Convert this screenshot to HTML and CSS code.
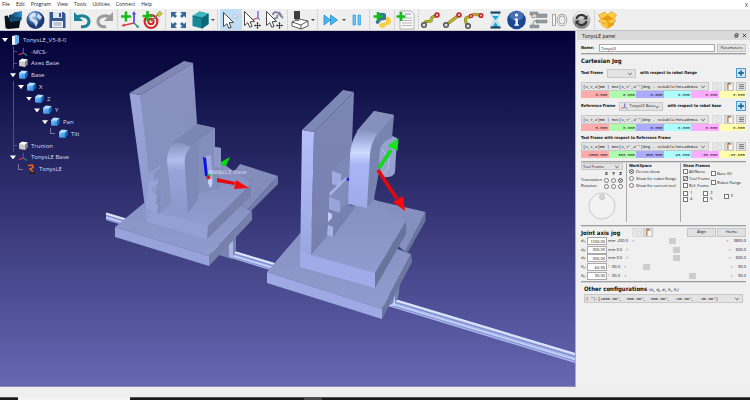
FILE: index.html
```html
<!DOCTYPE html>
<html lang="en">
<head>
<meta charset="utf-8">
<title>TonysLE</title>
<link rel="stylesheet" href="styles.css">
</head>
<body>
<svg class="defs" aria-hidden="true">
  <defs>
    <linearGradient id="blueCube" x2="1" y2="1"><stop offset="0" stop-color="#9fd8ff"/><stop offset="1" stop-color="#1177d8"/></linearGradient>
    <linearGradient id="steel" x2="0" y2="1"><stop offset="0" stop-color="#fff"/><stop offset="1" stop-color="#777"/></linearGradient>
    <linearGradient id="folder" x2="0" y2="1"><stop offset="0" stop-color="#0b1a2a"/><stop offset="1" stop-color="#050a12"/></linearGradient>
    <linearGradient id="folderBlue" x2="1"><stop offset="0" stop-color="#0d3552"/><stop offset="1" stop-color="#2b94d6"/></linearGradient>
    <radialGradient id="globe" cx=".4" cy=".3"><stop offset="0" stop-color="#b9d2f5"/><stop offset=".6" stop-color="#4570b5"/><stop offset="1" stop-color="#1c3972"/></radialGradient>
    <symbol id="cube" viewBox="0 0 10 10"><path d="M1 3.3 3.6.8 9.4 1v5L7 8.9 1.2 8.4z" fill="url(#blueCube)"/><path d="M1 3.3 3.6.8 9.4 1 7 3.7z" fill="#b4e2ff"/><path d="M7 3.7 9.4 1v5L7 8.9z" fill="#1569c0"/></symbol>
    <symbol id="cubeGray" viewBox="0 0 10 10"><path d="M1 3 4 .8 9.4 1.3v5L7 8.9 1.2 8z" fill="#c9c9c5"/><path d="M1 3 4 .8 9.4 1.3 7 3.7z" fill="#fff"/><path d="M7 3.7 9.4 1.3v5L7 8.9z" fill="#85857f"/></symbol>
    <symbol id="axes" viewBox="0 0 10 10"><path d="M5.3 6V.8" stroke="#4646e0" stroke-width="1.2"/><path d="M5.3 6 .7 7.8" stroke="#f03048" stroke-width="1.2"/><path d="M5.3 6 9 8.6" stroke="#208f78" stroke-width="1.2"/></symbol>
    <symbol id="cursor" viewBox="0 0 20 20"><path d="M3.5 2.5v14l3.3-2.8 2 4.6 2.3-1-2-4.5 4.4-.3z" fill="#fff" stroke="#333" stroke-width=".9"/></symbol>
    <symbol id="move" viewBox="0 0 8 8"><path d="M4 1v6M1 4h6" stroke="#222" stroke-width=".9"/><path d="M4 0 5.3 1.7H2.7zM4 8 2.7 6.3h2.6zM0 4l1.7-1.3v2.6zM8 4 6.3 5.3V2.7z" fill="#222"/></symbol>
    <symbol id="paste" viewBox="0 0 10 10"><path d="M2 1.5h5v7H2z" fill="#c99b68"/><path d="M3.3.8h2.4v1.4H3.3z" fill="#777"/><path d="M4.2 3.2h3.6v5.5H4.2z" fill="#fff" stroke="#d8cfc4" stroke-width=".3"/></symbol>
    <symbol id="copy" viewBox="0 0 10 10"><path d="M2.5 1.8h3v5h-3zM4.7 3.5h3v5h-3z" fill="#f0f0f0" stroke="#c6c6c6" stroke-width=".4"/></symbol>
    <symbol id="list" viewBox="0 0 10 10"><path d="M2.3 3h5.4M2.3 5h5.4M2.3 7h5.4" stroke="#777" stroke-width="1.1"/></symbol>
  </defs>
</svg>
<div class="app">
<header class="menubar">
  <nav class="menus"><a href="#">File</a><a href="#">Edit</a><a href="#">Program</a><a href="#">View</a><a href="#">Tools</a><a href="#">Utilities</a><a href="#">Connect</a><a href="#">Help</a></nav>
  <button class="closedoc" aria-label="Close">X</button>
</header>

<div class="toolbar">
  <div class="group g3">
    <button aria-label="Open"><svg viewBox="0 0 21 20"><path d="m6 5 4-1 1-1.500L19 1v9L6 12z" fill="url(#folderBlue)"/><path d="m1.500 6 3-.5L6 8l12-1-2 11-11 1-2.500-1z" fill="url(#folder)"/><path d="m6 8 12-1-.7 3.500-10 1.500z" fill="#14507c"/></svg></button>
    <button aria-label="Online library"><svg viewBox="0 0 21 20"><circle cx="10.500" cy="10" r="9" fill="url(#globe)"/><path d="M4 6c2-3 5-4 7-3l-1 3-3 1 1 2 4 1 1 3-2 4-2-4-4-3zM13 3l4 4-2 3-3-3z" fill="#e8f0fc" opacity=".85"/></svg></button>
    <button aria-label="Save"><svg viewBox="0 0 21 20"><path d="M2.500 2h14l2 2v14h-16z" fill="#36578d"/><path d="M6 2h9v6H6z" fill="#dfe5ee"/><path d="M12 3h2v4h-2z" fill="#36578d"/><path d="M5 11h11v6.500H5z" fill="#eef1f5"/><path d="M6.500 13h8M6.500 15h8" stroke="#8c9bb5"/></svg></button>
  </div>
  <div class="group g2 wide">
    <button aria-label="Undo"><svg viewBox="0 0 21 20"><path d="M4 8c5-4 13-2 13 3.500 0 4-4 6-8 5" fill="none" stroke="#1d8296" stroke-width="3"/><path d="M2 2v9h9z" fill="#1d8296"/></svg></button>
    <button aria-label="Redo"><svg viewBox="0 0 21 20"><path d="M17 8C12 4 4 6 4 11.500c0 4 4 6 8 5" fill="none" stroke="#9b9b9b" stroke-width="3"/><path d="M19 2v9h-9z" fill="#9b9b9b"/></svg></button>
  </div>
  <div class="group g2">
    <button aria-label="Add reference frame"><svg viewBox="0 0 21 20"><path d="M14 13V3" stroke="#5555ee" stroke-width="1.800"/><path d="m12 4.500 2-3.500 2 3.500z" fill="#4444dd"/><path d="m14 13-11 2.500" stroke="#e03b48" stroke-width="1.600"/><path d="m1 16 3.500-2.500.5 3z" fill="#e03b48"/><path d="m14 13 4 4" stroke="#269a84" stroke-width="1.600"/><path d="m19.500 18-3.600-.8 2-2.200z" fill="#269a84"/><path d="M6 1.500v10M1 6.500h10" stroke="#16bd16" stroke-width="2.600"/></svg></button>
    <button aria-label="Add target"><svg viewBox="0 0 21 20"><circle cx="9" cy="11.500" r="7.500" fill="#d72828"/><circle cx="9" cy="11.500" r="5.200" fill="#fff"/><circle cx="9" cy="11.500" r="3.700" fill="#d72828"/><circle cx="9" cy="11.500" r="1.500" fill="#fff"/><path d="m9 11.500 8-8" stroke="#777" stroke-width="1.200"/><path d="m15 3.500 3-2.500 1 2 1.500.5-3 3-2-.5z" fill="#c9cc28" stroke="#77781a" stroke-width=".4"/><path d="M5.500 1v10M.5 6h10" stroke="#16bd16" stroke-width="2.600"/></svg></button>
  </div>
  <div class="group g2 drop">
    <button aria-label="Fit all"><svg viewBox="0 0 21 20"><path d="M3 2h15v16H3z" fill="#f8fbfe"/><path d="M3 2h6L7 4l2 2-2 2-2-2-2 2zM18 2v6l-2-2-2 2-2-2 2-2-2-2zM3 18v-6l2 2 2-2 2 2-2 2 2 2zM18 18h-6l2-2-2-2 2-2 2 2 2-2z" fill="#356a9b"/></svg></button>
    <button aria-label="Isometric view"><svg viewBox="0 0 21 20"><path d="m2.500 6 7-4.500 9 2V14l-6.500 4.500-9.500-2.500z" fill="#158997"/><path d="m2.500 6 7-4.500 9 2L12 8z" fill="#41b5bf"/><path d="m12 8 6.500-4.500V14L12 18.500z" fill="#086a78"/><path d="M2.500 6 12 8v10.500" fill="none" stroke="#075562" stroke-width=".7"/></svg></button>
  </div>
  <div class="group g3">
    <button class="active" aria-label="Select"><svg viewBox="0 0 21 20"><use href="#cursor" width="20" height="20"/><path d="M14 4v4l1.200-.8.8 1.500.8-.4-.7-1.600h1.400z" fill="#fff" stroke="#8495aa" stroke-width=".4"/></svg></button>
    <button aria-label="Move frame"><svg viewBox="0 0 21 20"><path d="M16 8V1" stroke="#5555e8" stroke-width="1.200"/><path d="m16 8-7 2" stroke="#e14450" stroke-width="1.200"/><path d="m16 8 2 2" stroke="#279"/><use href="#cursor" width="20" height="20" x="-1" y="-1"/><use href="#move" x="12" y="12" width="7" height="7"/></svg></button>
    <button aria-label="Move tool"><svg viewBox="0 0 21 20"><path d="M9 5c0-3 4-4 6-1l4 4m-9 0c3 1 4-1 3-3m2-3 3 5" stroke="#7f829e" stroke-width="1.800" fill="none"/><use href="#cursor" width="20" height="20" x="-1" y="-1"/><use href="#move" x="12" y="12" width="7" height="7"/></svg></button>
  </div>
  <div class="group g1 drop">
    <button aria-label="Collision check"><svg viewBox="0 0 21 20"><path d="m2 12 7-3 9 2v5l-7 3-9-3z" fill="#fff" stroke="#333" stroke-width=".8"/><path d="m2 12 9 3 7-4m-7 4v4" fill="none" stroke="#333" stroke-width=".8"/><path d="M4 1h6v8H4z" fill="#3e3e3e"/><path d="M5 9h4v2H5z" fill="#777"/></svg></button>
  </div>
  <div class="group play">
    <button class="drop" aria-label="Fast simulation"><svg viewBox="0 0 21 20"><path d="m4 5 6.500 5L4 15zM10.500 5l7 5-7 5z" fill="#49b6f1" stroke="#218dcc" stroke-width=".8"/></svg></button>
    <button aria-label="Pause"><svg viewBox="0 0 21 20"><path d="M7 5h2.500v10H7zM12 5h2.500v10H12z" fill="#6bc4f8" stroke="#2f9bd9" stroke-width=".7"/></svg></button>
  </div>
  <div class="group g1 tight">
    <button aria-label="Add Python program"><svg viewBox="0 0 21 20"><path d="M6 10V5c0-3 8-3 8 0v4c0 2-5 0-6 3l-2 2c-3 0-3-4 0-4z" fill="#3973a8"/><path d="M14 7h2c4 1 4 7 0 8h-2c0 4-7 4-7 0 0-3 7-1 7-4z" fill="#f5cf3f"/><path d="M6 2v9M1.500 6.500h9" stroke="#16bd16" stroke-width="2.600"/></svg></button>
  </div>
  <div class="group g1 tight">
    <button aria-label="Add program"><svg viewBox="0 0 21 20"><path d="M4 1h11l3 3v15H4z" fill="#fafafa" stroke="#999" stroke-width=".7"/><path d="M6 8h10M6 10.500h10M6 13h10M6 15.500h10" stroke="#999" stroke-width=".7"/><path d="M9 4h6" stroke="#a77ae0"/><path d="M5 2v9M.5 6.500h9" stroke="#16bd16" stroke-width="2.600"/></svg></button>
  </div>
  <div class="group g8">
    <button aria-label="Joint move"><svg viewBox="0 0 21 20"><path d="M4 15c1-6 3-2 7-4 0-5 3-4 6-6" stroke="#7c7a18" stroke-width="3" fill="none"/><path d="M4 15c1-6 3-2 7-4 0-5 3-4 6-6" stroke="#c1ba2e" stroke-width="1.700" fill="none"/><circle cx="4" cy="15" r="2.300" fill="#ddd" stroke="#555" stroke-width="1.500"/><circle cx="17" cy="5" r="2" fill="#f4b7b7" stroke="#c5222d" stroke-width="1.500"/></svg></button>
    <button aria-label="Linear move"><svg viewBox="0 0 21 20"><path d="M4 15 17 5" stroke="#7c7a18" stroke-width="3"/><path d="M4 15 17 5" stroke="#c1ba2e" stroke-width="1.700"/><circle cx="4" cy="15" r="2.300" fill="#ddd" stroke="#555" stroke-width="1.500"/><circle cx="17" cy="5" r="2" fill="#f4b7b7" stroke="#c5222d" stroke-width="1.500"/></svg></button>
    <button aria-label="Circular move"><svg viewBox="0 0 21 20"><path d="M5 16C1 10 2 7 6 7c4-4 7-2 12-2" stroke="#7c7a18" stroke-width="3" fill="none"/><path d="M5 16C1 10 2 7 6 7c4-4 7-2 12-2" stroke="#c1ba2e" stroke-width="1.700" fill="none"/><circle cx="5" cy="16" r="2.300" fill="#ddd" stroke="#555" stroke-width="1.500"/><circle cx="8" cy="6" r="1.600" fill="#f4b7b7" stroke="#c5222d" stroke-width="1.300"/><circle cx="18" cy="5.500" r="1.800" fill="#f4b7b7" stroke="#c5222d" stroke-width="1.500"/></svg></button>
    <button aria-label="Pause instruction"><svg viewBox="0 0 21 20"><path d="M6.500 3h8c0 4-2 5-3 7 1 2 3 3 3 7h-8c0-4 2-5 3-7-1-2-3-3-3-7z" fill="#c7ecfa" stroke="#79a8bd" stroke-width=".5"/><path d="M7.500 6h6l-3 4zM10.500 12l3 5h-6z" fill="#18a5df"/><path d="M5.500 2.500h10M5.500 17.500h10" stroke="#1d3d51" stroke-width="1.800"/></svg></button>
    <button aria-label="Message"><svg viewBox="0 0 21 20"><circle cx="10.500" cy="10" r="9.300" fill="#1b4795"/><ellipse cx="10.500" cy="6" rx="7" ry="4.500" fill="#6993d0" opacity=".55"/><circle cx="10.500" cy="5" r="1.500" fill="#fff"/><path d="M8.500 8.500h3.300v6H13v1.200H8.300v-1.200h1.200V9.700h-1z" fill="#fff"/></svg></button>
    <button aria-label="Program call"><svg viewBox="0 0 21 20"><path d="M2 2h8v3H2zM8 4h11v3.500H8zM8 10h11v3H8zM2 15h9v3H2z" fill="#929aa3" stroke="#777e86" stroke-width=".5"/><path d="M4 4c-1 5 1 4 4 3M5 15c0-4 1-5 4-4" fill="none" stroke="#555" stroke-width=".7"/><path d="m4 5 3-1 2 2-2 2z" fill="#e4d2b0"/></svg></button>
    <button aria-label="Set IO"><svg viewBox="0 0 21 20"><path d="M3.500 4.500h3v11h-3z" fill="#fff" stroke="#888" stroke-width=".8"/><ellipse cx="13" cy="10" rx="4" ry="5" fill="none" stroke="#888" stroke-width="2.600"/><ellipse cx="13" cy="10" rx="4" ry="5" fill="none" stroke="#fff" stroke-width="1.200"/></svg></button>
    <button aria-label="Update"><svg viewBox="0 0 21 20"><circle cx="10.500" cy="10" r="8.800" fill="url(#steel)" stroke="#aaa" stroke-width=".4"/><path d="M5.500 9c1-5 7-5 9-2M15.500 11c-1 5-7 5-9 2" fill="none" stroke="#333" stroke-width="2.200"/><path d="M16.500 5v4.500H12zM4.500 15v-4.500H9z" fill="#333"/></svg></button>
  </div>
  <div class="group g1 last">
    <button aria-label="Add-ins"><svg viewBox="0 0 21 20"><path d="m4 9 6.500 2L17 9v6l-6.500 4L4 15z" fill="#f2a516"/><path d="m4 9 6.500 2v8L4 15z" fill="#ffc83d"/><path d="m4 9-2.500-4L8 2l2.500 3L14 1.500 19.500 5 17 9l2 2-5.500 3-3-3-3.500 3L1.500 11z" fill="#ffce45" stroke="#d98c09" stroke-width=".6"/><path d="m4 9 6.500-4L17 9l-6.500 2z" fill="#e89c12"/></svg></button>
  </div>
</div>

<main class="workspace">
  <section class="viewport">
    <svg class="scene" viewBox="0 31 575 356" preserveAspectRatio="xMinYMin slice" role="img" aria-label="3D view">
      <defs>
        <linearGradient id="front" x2="0" y2="1"><stop offset="0" stop-color="#b5c0fa"/><stop offset="1" stop-color="#98a4de"/></linearGradient>
        <linearGradient id="plateL" x2="0" y2="1"><stop offset="0" stop-color="#9ca5d8"/><stop offset="1" stop-color="#8c97cb"/></linearGradient>
        <linearGradient id="side" x2="0" y2="1"><stop offset="0" stop-color="#7c86b4"/><stop offset="1" stop-color="#777fae"/></linearGradient>
        <linearGradient id="sideL" x2="0" y2="1"><stop offset="0" stop-color="#8992bf"/><stop offset="1" stop-color="#818bba"/></linearGradient>
        <linearGradient id="top" x2="0" y2="1"><stop offset="0" stop-color="#8690bf"/><stop offset="1" stop-color="#909cce"/></linearGradient>
        <linearGradient id="headR" x2="0" y2="1"><stop offset="0" stop-color="#8690bd"/><stop offset=".14" stop-color="#a6b1e3"/><stop offset=".3" stop-color="#cfdaff"/><stop offset=".45" stop-color="#a9b5f5"/><stop offset="1" stop-color="#9eabe9"/></linearGradient>
        <linearGradient id="headL" x2="0" y2="1"><stop offset="0" stop-color="#8993bf"/><stop offset=".25" stop-color="#b3bdf0"/><stop offset=".4" stop-color="#98a4d8"/><stop offset="1" stop-color="#8c97cc"/></linearGradient>
      </defs>
      <g>
        <path d="m106 213 469 140v10L106 220z" fill="#a8b6ee"/>
        <path d="m106 213.500 469 140.500" stroke="#d9e6ff" stroke-width="2"/>
        <path d="m106 215.500 469 141" stroke="#7984c0"/>
        <path d="m106 217.500 469 142" stroke="#c5d2ff" stroke-width="1.500"/>
        <path d="m106 219 469 142" stroke="#6874ae" stroke-width=".6"/>
      </g>
      <g>
        <path d="m219 255 17-19v14l-4 9z" fill="#7984b3"/><path d="m229 244 4-3v17l-4-1z" fill="#aab5e6"/>
        <path d="m144 203-29 24 94 29 43-45-65-30z" fill="url(#top)"/>
        <path d="m115 227 94 29v10l-94-29z" fill="#97a3da"/>
        <path d="m209 256 43-45v9l-43 46z" fill="#7680aa"/>
        <path d="m240 164 38 12-30 33-35-10z" fill="#838dbc"/>
        <path d="m278 176v8l-28 28-2-3z" fill="#737da9"/>
        <path d="m140 95 53-32 7 106-45 50z" fill="url(#sideL)"/>
        <path d="m129.500 93 10.500 2 18 92-3 33-8 2z" fill="url(#plateL)"/>
        <path d="m129.500 93 54.500-32 9.500 2L140 95z" fill="#7e88b3"/>
        <path d="m140 95 9 79 12-9-8 10 4 11-4 15 8-7-2 18 9 6 30-34-5-60-35-20z" fill="#8791c0"/>
        <path d="m149 174 11-8v2l-10 7zm0 7h6l3-3v6l-6 3v5l5 3-1 7-3 3 5-1-1 12-12-10z" fill="#98a3d5"/>
        <path d="m158 216 8-9 24-21 31-24 30 22-43 42z" fill="url(#top)"/>
        <path d="m147 213 16 1 5 1.500 40 10.500-1 13-60-17z" fill="#949fd3"/>
        <path d="m208 226 43-42v12l-44 43z" fill="#7781ac"/>
        <path d="m173 143 24-19 18 4v19l6 1v40l-21 5-12 20z" fill="#848ebc"/>
        <path d="m172 143 25-19 18 4-25 19z" fill="#7c86b2"/>
        <path d="m167 161c1-14 5-20 14-18l10 4c-5 5-7 10-6 20l3 46-16-5z" fill="url(#headL)"/>
        <path d="m185 166c-1-13 3-18 14-23l-1 57-10 13z" fill="#7f89b7"/>
        <path d="m214 147 7 1v20l-7-1z" fill="#8e99c8"/>
        <path d="m206 156 5-1 2 29-4 4z" fill="#a0abd9"/><path d="m209 170 3 11-1 7-3-5z" fill="#c9d5ff"/>
        <path d="m203 157 3 1 2 19-3-1z" fill="#0712e8"/>
        <path d="m207 175 4-2-1 5z" fill="#15cf24"/><circle cx="208.500" cy="177.500" r="2" fill="#e91317"/>
        <path d="m221 162 9-5-4 9-5-1z" fill="#05dc0c"/>
        <path d="m217 178 18 4-.5 3L217 182z" fill="#e5070b"/><path d="m236 180 13 8-15 1z" fill="#f60c0c"/>
        <text x="209" y="174" class="label3d">MCS</text><text x="209" y="174" class="label3d">TonysLE Base</text>
      </g>
      <g>
        <path d="m388 304 12-21-2 15-5 8z" fill="#7883b3"/><path d="m393 303 2-8v11l-6 0z" fill="#c2ceff"/>
        <path d="m302 231-35 41 115 37 29-55-33-12-52-20z" fill="url(#top)"/>
        <path d="m267 272 115 37v10l-115-36z" fill="#9faae4"/>
        <path d="m382 309 29-55 1 8-30 57z" fill="#6c779f"/>
        <path d="m374 200 51.500 12-20 40-35-30z" fill="#858fc0"/>
        <path d="m425.500 212v9l-18 32-3-1z" fill="#69749b"/>
        <path d="m314 132 40-40-5 125-38 38z" fill="url(#side)"/>
        <path d="m302 130 12 2-3 123-11 12z" fill="url(#front)"/>
        <path d="m302 130 41-40 11 2-40 40z" fill="#7d87b5"/>
        <path d="m311 255 43-50 20-6 32 23-31 51z" fill="url(#top)"/>
        <path d="m300 251 11 4 64 18v15l-75-21z" fill="#a0acea"/>
        <path d="m375 273 31-52v13l-31 54z" fill="#69749c"/>
        <path d="m332 171 17-18v29l-17 3z" fill="#7d88b7"/><path d="m332 171 9 3v13l-9-3z" fill="#a0acdf"/>
        <path d="m329 196 20-17v20l-10 14-10-4z" fill="#818cbb"/><path d="m329 197 11 4v12l-11-4z" fill="#99a5d9"/>
        <path d="m329 193 17-16v3l-15 15v2z" fill="#a8b3e3"/>
        <path d="m327 224 20-19 9 1-23 31-6-2z" fill="#7681b0"/><path d="m328 225 5 2v10l-6-2z" fill="#a7b3e7"/><path d="m328 212 4 2v4l-4 4z" fill="#c0ccfa"/>
        <path d="m346 180 3-3v4z" fill="#111ce3"/>
        <path d="m390 135 7 3-2 34c-1 5-9 6-14 5l-7-8 5-25z" fill="#96a2d0"/>
        <path d="m380 147 9 12-1 10-5 5" fill="none" stroke="#b5c2ed"/>
        <path d="m357 131 17-20 20 4-2 23c-12 3-14 14-12 28l-6 33-8 9-6-63z" fill="#7883b0"/>
        <path d="m357 131 17-20 20 4-20 24z" fill="#8690bd"/>
        <path d="m350 158c0-14 5-24 9-29l19 4c-5 6-7 14-8 21l-3 54-19-4z" fill="url(#headR)"/>
        <path d="m379 168 12-18" stroke="#10db15" stroke-width="3.500"/><path d="m398.500 138-1 13-10-5z" fill="#16e51a"/>
        <path d="m378 170 19 29" stroke="#e5070b" stroke-width="3.500"/><path d="m393 202 10-6 2 15z" fill="#f60c0c"/>
      </g>
    </svg>
    <ul class="tree">
      <li><i class="tw"></i><svg viewBox="0 0 10 10"><path d="M2 1 7 0v9.500L2 10z" fill="#eaf6ff"/><path d="m5 1 4-.7v8L5 9.500z" fill="#5fb2ef"/></svg>TonysLE_V5-8-0</li>
      <li class="d1 leaf"><svg viewBox="0 0 10 10"><use href="#axes"/></svg>-MCS-</li>
      <li class="d1 leaf"><svg viewBox="0 0 10 10"><use href="#cubeGray"/></svg>Axes Base</li>
      <li class="d1"><i class="tw"></i><svg viewBox="0 0 10 10"><use href="#cube"/></svg>Base</li>
      <li class="d2 through"><i class="tw"></i><svg viewBox="0 0 10 10"><use href="#cube"/></svg>X</li>
      <li class="d3 through"><i class="tw"></i><svg viewBox="0 0 10 10"><use href="#cube"/></svg>Z</li>
      <li class="d4 through"><i class="tw"></i><svg viewBox="0 0 10 10"><use href="#cube"/></svg>Y</li>
      <li class="d5 through"><i class="tw"></i><svg viewBox="0 0 10 10"><use href="#cube"/></svg>Pan</li>
      <li class="d6 through"><i class="elbow"></i><svg viewBox="0 0 10 10"><use href="#cube"/></svg>Tilt</li>
      <li class="d1 leaf"><svg viewBox="0 0 10 10"><use href="#cubeGray"/></svg>Trunion</li>
      <li class="d1"><i class="tw"></i><svg viewBox="0 0 10 10"><use href="#axes"/></svg>TonysLE Base</li>
      <li class="d2"><i class="elbow"></i><svg viewBox="0 0 10 10"><path d="M2 1.500 6.500 1 7 3.500 4 5l3 3" fill="none" stroke="#e8651b" stroke-width="1.500"/><path d="M4 8h5v2H4z" fill="#222"/></svg>TonysLE</li>
    </ul>
  </section>

  <aside class="panel">
    <div class="titlebar"><span>TonysLE panel</span><button aria-label="Float"><svg viewBox="0 0 6 6"><path d="M2 .8h3v3H2zM1 2.200h3v3H1z" fill="none" stroke="#333" stroke-width=".7"/></svg></button><button aria-label="Close panel"><svg viewBox="0 0 6 6"><path d="m1 1 4 4m0-4L1 5" stroke="#222" stroke-width="1"/></svg></button></div>
    <div class="content">
      <div class="namerow"><label for="name">Name:</label><input id="name" value="TonysLE"><button class="btn">Parameters</button></div>
      <hr>
      <h2>Cartesian Jog</h2>
      <div class="framerow"><label for="tf">Tool Frame</label><span class="select tool"><select id="tf"><option></option></select></span><b>with respect to robot flange</b><button class="plus" aria-label="Add tool"><svg viewBox="0 0 10 10"><path d="M5 1.500v7M1.500 5h7" stroke="#236e9d" stroke-width="2.200"/></svg></button></div>
      <div class="poserow"><span class="select mono"><select aria-label="Tool pose format"><option>[X,Y,Z]mm | Rot[X,Y',Z'']deg - Stäubli/Mecademic</option></select></span><button class="btn faint" aria-label="Copy"><svg viewBox="0 0 10 10"><use href="#copy"/></svg></button><button class="btn" aria-label="Paste"><svg viewBox="0 0 10 10"><use href="#paste"/></svg></button><button class="btn" aria-label="More"><svg viewBox="0 0 10 10"><use href="#list"/></svg></button></div>
      <div class="pose"><input aria-label="X" value="0.000"><input aria-label="Y" value="0.000"><input aria-label="Z" value="0.000"><input aria-label="RX" value="0.000"><input aria-label="RY" value="0.000"><input aria-label="RZ" value="0.000"></div>
      <div class="framerow second"><label for="rf">Reference Frame</label><span class="select ref"><svg viewBox="0 0 10 10"><use href="#axes"/></svg><select id="rf"><option>TonysLE Base</option></select></span><b>with respect to robot base</b><button class="plus" aria-label="Add reference"><svg viewBox="0 0 10 10"><path d="M5 1.500v7M1.500 5h7" stroke="#236e9d" stroke-width="2.200"/></svg></button></div>
      <div class="poserow"><span class="select mono"><select aria-label="Reference pose format"><option>[X,Y,Z]mm | Rot[X,Y',Z'']deg - Stäubli/Mecademic</option></select></span><button class="btn faint" aria-label="Copy"><svg viewBox="0 0 10 10"><use href="#copy"/></svg></button><button class="btn" aria-label="Paste"><svg viewBox="0 0 10 10"><use href="#paste"/></svg></button><button class="btn" aria-label="More"><svg viewBox="0 0 10 10"><use href="#list"/></svg></button></div>
      <div class="pose"><input aria-label="X" value="0.000"><input aria-label="Y" value="0.000"><input aria-label="Z" value="0.000"><input aria-label="RX" value="0.000"><input aria-label="RY" value="0.000"><input aria-label="RZ" value="0.000"></div>
      <h3>Tool Frame with respect to Reference Frame</h3>
      <div class="poserow close"><span class="select mono"><select aria-label="Tool to reference pose format"><option>[X,Y,Z]mm | Rot[X,Y',Z'']deg - Stäubli/Mecademic</option></select></span><button class="btn faint" aria-label="Copy"><svg viewBox="0 0 10 10"><use href="#copy"/></svg></button><button class="btn" aria-label="Paste"><svg viewBox="0 0 10 10"><use href="#paste"/></svg></button><button class="btn" aria-label="More"><svg viewBox="0 0 10 10"><use href="#list"/></svg></button></div>
      <div class="pose"><input aria-label="X" value="1500.000"><input aria-label="Y" value="300.000"><input aria-label="Z" value="300.000"><input aria-label="RX" value="90.000"><input aria-label="RY" value="-30.000"><input aria-label="RZ" value="-30.000"></div>
      <hr class="spaced">
      <div class="sections">
        <div class="jog">
          <span class="select"><select aria-label="Jog frame"><option>Tool Frame</option></select></span>
          <div class="xyz">
            <span></span><b>X</b><b>Y</b><b>Z</b>
            <span>Translation</span><input type="radio" name="ax" aria-label="Translate X"><input type="radio" name="ax" aria-label="Translate Y"><input type="radio" name="ax" aria-label="Translate Z" checked>
            <span>Rotation</span><input type="radio" name="rot" aria-label="Rotate X"><input type="radio" name="rot" aria-label="Rotate Y"><input type="radio" name="rot" aria-label="Rotate Z">
          </div>
          <svg class="dial" viewBox="0 0 28 28"><circle cx="14" cy="14" r="13" fill="#f2f2f2" stroke="#b8b8b8" stroke-width=".7"/><circle cx="14" cy="5" r="2.500" fill="#d9d9d9" stroke="#aaa" stroke-width=".6"/></svg>
        </div>
        <div class="space">
          <h4>WorkSpace</h4>
          <label><input type="radio" name="ws" checked>Do not show</label>
          <label><input type="radio" name="ws">Show for robot flange</label>
          <label><input type="radio" name="ws">Show for current tool</label>
        </div>
        <div class="frames">
          <h4>Show Frames</h4>
          <div class="cols">
            <div><label><input type="checkbox">All/None</label><label><input type="checkbox" checked>Tool Frame</label><label><input type="checkbox">Ref. Frame</label></div>
            <div class="mid"><label><input type="checkbox">Base (0)</label><label><input type="checkbox">Robot Flange</label></div>
          </div>
          <div class="nums">
            <div><label><input type="checkbox">1</label><label><input type="checkbox">4</label></div>
            <div><label><input type="checkbox">2</label><label><input type="checkbox">5</label></div>
            <div class="mid"><label><input type="checkbox">3</label></div>
          </div>
        </div>
      </div>
      <hr class="spaced">
      <div class="jointhead"><h2>Joint axis jog</h2><button class="btn faint" aria-label="Copy joints"><svg viewBox="0 0 10 10"><use href="#copy"/></svg></button><button class="btn" aria-label="Paste joints"><svg viewBox="0 0 10 10"><use href="#paste"/></svg></button><button class="btn big">Align</button><button class="btn big">Home</button></div>
      <div class="joints">
        <div><label for="j1">d₁:</label><input id="j1" value="1500.00"><span>mm -200.0</span><i>&lt;</i><input type="range" aria-label="Joint 1" min="-200" max="3800" value="1500"><i>&gt;</i><span>3800.0</span></div>
        <div><label for="j2">d₂:</label><input id="j2" value="300.00"><span>mm 0.0</span><i>&lt;</i><input type="range" aria-label="Joint 2" min="0" max="600" value="300"><i>&gt;</i><span>600.0</span></div>
        <div><label for="j3">d₃:</label><input id="j3" value="300.00"><span>mm 0.0</span><i>&lt;</i><input type="range" aria-label="Joint 3" min="0" max="600" value="300"><i>&gt;</i><span>600.0</span></div>
        <div><label for="j4">θ₄:</label><input id="j4" value="-60.00"><span>° -90.0</span><i>&lt;</i><input type="range" aria-label="Joint 4" min="-90" max="90" value="-60"><i>&gt;</i><span>90.0</span></div>
        <div><label for="j5">θ₅:</label><input id="j5" value="30.00"><span>° -90.0</span><i>&lt;</i><input type="range" aria-label="Joint 5" min="-90" max="90" value="30"><i>&gt;</i><span>90.0</span></div>
      </div>
      <hr>
      <div class="other">
        <h2>Other configurations <small>(d₁, d₂, d₃, θ₄, θ₅)</small></h2>
        <span class="select mono"><select aria-label="Other configurations"><option>( *)-[1500.00°, &nbsp;300.00°, &nbsp;300.00°, &nbsp;-60.00°, &nbsp; 30.00°]</option></select></span>
      </div>
    </div>
  </aside>
</main>
<footer class="status"></footer>
<div class="taskbar"><span class="search"></span><span class="task"></span></div>
</div>
</body>
</html>
```
FILE: styles.css
```css
* { box-sizing: border-box; }
body { margin: 0; font-family: "Open Sans", "Noto Sans", sans-serif; font-size: 4px; line-height: 6px; color: #111; background: #f0f0f0; }
button, input, select { font: inherit; color: inherit; margin: 0; padding: 0; border: 0; background: none; border-radius: 0; min-width: 0; }
h2, h3, h4, hr, ul { margin: 0; padding: 0; border: 0; }
i { font-style: normal; }
.defs { position: absolute; width: 0; height: 0; }

.app { display: grid; grid-template-rows: 9px 22px 1fr 10px 3px; height: 100vh; }

.menubar { display: flex; justify-content: space-between; padding: 0 2px; background: #fff; font-size: 5px; line-height: 8px; }
.menus { display: flex; gap: 6px; }
.menus a { color: #222; text-decoration: none; }
.closedoc { color: #222; }

.toolbar { display: flex; padding-left: 3px; background: #efefef; border-bottom: 1px solid #c4c4c8; }
.group { display: flex; flex: none; position: relative; margin-right: 5px; }
.group::after { content: ""; position: absolute; right: -3px; top: 1px; bottom: 1px; border-right: 1px dotted #bcbcbc; }
.group button { flex: 1; display: flex; align-items: center; justify-content: center; }
.group svg { width: 21px; height: 20px; display: block; flex: none; }
.g1 { width: 21px; }
.g2 { width: 43px; }
.g3 { width: 65px; }
.g8 { width: 172px; }
.g3:first-child { margin-right: 4px; }
.tight { margin-right: 3px; }
.tight::after { right: -2px; }
.last::after { display: none; }
.play { width: 47px; }
.play button:last-child { flex: 0 0 21px; }
.group.drop { box-sizing: content-box; padding-right: 4px; }
.drop::before { content: ""; position: absolute; right: 0; top: 10px; border: 2px solid transparent; border-top-color: #444; border-bottom: 0; }
.play .drop { padding-right: 5px; }
.play .drop::before { right: 21px; }
.active { background: #c1ddf3; }

.workspace { display: grid; grid-template-columns: 1fr 174px; min-height: 0; }
.viewport { position: relative; overflow: hidden; border-right: 1px solid #aaaacb; border-bottom: 1px solid #8c8cb8; background: linear-gradient(#010136, #6767b3); }
.scene { position: absolute; inset: 0; width: 100%; height: 100%; }
.label3d { font: 6px Roboto, sans-serif; fill: #d6daf0; opacity: .8; }

.tree { position: relative; list-style: none; padding: 3px 0 0 2px; color: #dcdcec; font-size: 6px; line-height: 10px; width: 120px; display: grid; grid-template-rows: repeat(12, 1fr); height: 144px; }
.tree li { display: flex; align-items: center; gap: 2px; position: relative; }
.tree svg { width: 10px; height: 10px; margin-right: 1px; flex: none; }
.tw { width: 6px; height: 4px; background: #fff; clip-path: polygon(0 0, 100% 0, 50% 100%); }
.elbow { width: 5px; height: 6px; margin: -5px 1px 0 0; border: solid #7777a0; border-width: 0 0 1px 1px; }
.tree .d1 { padding-left: 8px; }
.tree .d2 { padding-left: 16px; }
.tree .d3 { padding-left: 24px; }
.tree .d4 { padding-left: 32px; }
.tree .d5 { padding-left: 40px; }
.tree .d6 { padding-left: 48px; }
.tree .leaf { padding-left: 16px; }
.leaf::before, .through::before { content: ""; position: absolute; left: 11px; top: 0; bottom: 0; border-left: 1px solid #50507e; }
.leaf::after { content: ""; position: absolute; left: 11px; top: 5px; width: 4px; border-top: 1px solid #50507e; }

.panel { background: #f0f0f0; min-width: 0; }
.titlebar { display: flex; align-items: center; gap: 2px; height: 9px; padding: 0 2px 0 5px; margin-left: 1px; background: #dadada; font-size: 5px; }
.titlebar span { flex: 1; }
.titlebar button { width: 6px; height: 6px; }
.titlebar svg { display: block; width: 5px; height: 5px; }
.content { padding: 3px 4px 0 5px; display: flex; flex-direction: column; }
hr { height: 2px; border-top: 1px solid #9f9f9f; border-bottom: 1px solid #d4d4d4; }
h2, h3, h4, b, .framerow label, .namerow label { font-family: "DejaVu Sans Condensed", "Noto Sans", sans-serif; font-weight: bold; color: #111; }
h2 { font-size: 6px; line-height: 11px; }
h3, h4 { font-size: 4px; line-height: 6px; }
.btn { display: flex; align-items: center; justify-content: center; background: #e1e1e1; border: 1px solid #c6c6c6; height: 9px; }
.btn svg { width: 9px; height: 9px; flex: none; }
.faint { background: #e9e9e9; border-color: #dcdcdc; }

.namerow { display: flex; align-items: center; height: 10px; gap: 2px; font-size: 4px; }
.namerow label { width: 16px; }
.namerow input { flex: 1; height: 8px; padding: 0 1px; background: #fff; border: 1px solid #a9a9a9; }
.namerow .btn { width: 29px; height: 8px; }

.select { position: relative; display: flex; align-items: center; height: 9px; background: #e3e3e3; border: 1px solid #c9c9c9; }
.select select { appearance: none; width: 100%; height: 100%; padding: 0 7px 0 1px; white-space: pre; }
.select::after { content: ""; position: absolute; right: 3px; top: 1px; width: 3px; height: 3px; border: solid #777; border-width: 0 1px 1px 0; transform: rotate(45deg) scale(.8); pointer-events: none; }
.select svg { width: 7px; height: 7px; flex: none; margin-left: 1px; }
.mono { flex: 1; }
.mono select, .pose { font-family: "Liberation Mono", monospace; }

.framerow { display: flex; align-items: center; height: 12px; margin-top: 1px; gap: 4px; }
.framerow b { flex: 1; white-space: nowrap; }
.framerow.second { margin-top: 2px; }
.framerow label { white-space: nowrap; }
.tool { width: 29px; }
.ref { width: 44px; }
.ref select { padding-right: 0; }
.plus { width: 10px; height: 10px; border: 1px solid #4c9bd1; background: #cde6f7; }
.plus svg { display: block; width: 8px; height: 8px; }
.poserow { display: flex; gap: 2px; margin-top: 3px; }
.poserow .select { margin-right: 1px; }
.poserow .btn { width: 10px; }
.poserow.close { margin-top: 0; }
.pose { display: grid; grid-template-columns: repeat(6, 1fr); height: 7px; }
.pose input { width: 100%; text-align: right; padding-right: 1px; background: #ffabab; }
.pose :nth-child(2) { background: #abffab; }
.pose :nth-child(3) { background: #ababff; }
.pose :nth-child(4) { background: #abffff; }
.pose :nth-child(5) { background: #ffabff; }
.pose :nth-child(6) { background: #ffffab; }
.content h3 { line-height: 7px; margin: 3px 0 1px; }
hr.spaced { margin-top: 3px; }

input[type="radio"], input[type="checkbox"] { appearance: none; width: 5px; height: 5px; flex: none; border: 1px solid #777; background: #fff; }
input[type="radio"] { border-radius: 50%; }
input[type="radio"]:checked { background: #222; box-shadow: inset 0 0 0 1px #fff; }
input[type="checkbox"]:checked { background: linear-gradient(135deg, #fff 40%, #777 40% 60%, #fff 60%); }

.sections { display: grid; grid-template-columns: 45px 54px 1fr; height: 59px; }
.sections h4 { line-height: 5px; }
.space, .frames { border-left: 1px solid #aaa; padding-left: 2px; }
.sections label { display: flex; align-items: center; gap: 2px; white-space: nowrap; }
.jog .select { width: 42px; height: 7px; }
.jog .select::after { top: 0; }
.xyz { display: grid; grid-template-columns: 22px repeat(3, 7px); align-items: center; justify-items: center; margin-top: 1px; }
.xyz span { justify-self: start; }
.dial { display: block; width: 28px; height: 28px; margin: 3px 0 0 7px; }
.space label { height: 7px; }
.space { display: flex; flex-direction: column; }
.cols, .nums { display: flex; }
.cols { gap: 1px; }
.nums { gap: 11px; margin-top: 1px; }
.cols label { height: 7px; }
.cols .mid { margin-top: 1px; }
.cols .mid label { height: 9px; }
.nums label { height: 6px; }
.nums .mid { align-self: center; }
.sections .cols label { gap: 1px; }

.jointhead { display: flex; align-items: center; height: 10px; gap: 1px; }
.jointhead h2 { flex: 1; }
.jointhead .btn { width: 10px; }
.jointhead .faint + .btn { margin-right: 33px; }
.jointhead .big { width: 29px; height: 9px; }
.joints { display: grid; grid-template-rows: repeat(5, 1fr); height: 43px; margin-bottom: 1px; }
.joints div { display: flex; align-items: center; gap: 1px; }
.joints span { white-space: nowrap; }
.joints label { width: 5px; }
.joints label + input { width: 20px; height: 8px; padding: 0 1px; border: 1px solid #aaa; background: #fff; text-align: right; }
.joints i { margin-left: 3px; }
.joints i + span { margin-left: 4px; }
input[type="range"] { appearance: none; flex: 1; width: 0; height: 6px; }
input[type="range"]::-webkit-slider-thumb { appearance: none; width: 7px; height: 6px; background: #cdcdcd; }
.other { padding: 1px 3px 0; }
.other h2 { line-height: 10px; }
.other small { font: 4px "Open Sans", sans-serif; }

.status { background: #efefef; }
.taskbar { display: flex; background: #1b191b; border-top: 1px solid #555; padding-left: 18px; }
.search { width: 112px; background: #f3f3f3; margin-top: -1px; }
.task { width: 18px; margin-left: 174px; background: #4b494b; }
```
